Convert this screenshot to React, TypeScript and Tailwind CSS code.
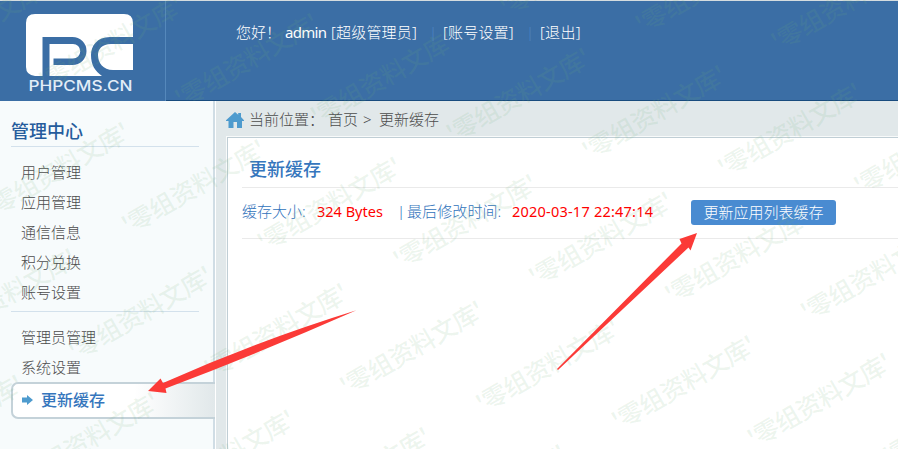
import React from "react";

const sans = "font-['Noto_Sans','Noto_Sans_CJK_SC',sans-serif]";

const marks: { x: number; y: number }[] = [];
for (let i = -6; i < 8; i++) {
  for (let j = -4; j < 3; j++) {
    const x = 412.3 + i * 135.8 - j * 53.2;
    const y = 348.5 + i * 17.4 + j * 126.4;
    if (x > -90 && x < 990 && y > -60 && y < 510) marks.push({ x, y });
  }
}

function Watermark() {
  return (
    <svg className="pointer-events-none absolute inset-0 h-[449px] w-[898px]" viewBox="0 0 898 449" aria-hidden="true">
      {marks.map((m, i) => (
        <text
          key={i}
          transform={`translate(${m.x} ${m.y}) rotate(-30)`}
          textAnchor="middle"
          y="9"
          textLength="161"
          className="fill-[#6fb07a]/13 font-['Noto_Sans_CJK_SC',sans-serif] text-[25px] font-medium"
        >
          '零组资料文库'
        </text>
      ))}
    </svg>
  );
}

function Arrows() {
  return (
    <svg className="pointer-events-none absolute inset-0 h-[449px] w-[898px]" viewBox="0 0 898 449" aria-hidden="true">
      <g fill="#fb3a37">
        <path d="M148 391 L160.500 378.500 L163 383 Q260 340 356.500 310.300 Q262 352 165.500 388.500 L166.500 393 Z" />
        <path d="M697 233 L679.500 239 L681.500 243.500 L557 369 L558 370 L688.500 247.500 L690.500 250.500 Z" />
      </g>
    </svg>
  );
}

function Logo() {
  return (
    <svg className="ml-6 mt-[11px] h-[82px] w-[112px]" viewBox="24 12 112 82">
      <path
        d="M35 14 H124 Q133 14 133 23 V37 H110 C97 37 91 46 91 55 C91 65 95 71 102 76 H49.500 V44 H73 A7.250 7.250 0 0 1 73 58.500 H53.500 V65 H72.500 A14 14 0 0 0 72.500 37 H42.500 V76 H35 Q26 75 26 67 V23 Q26 14 35 14 Z M133 44 H111 C102 44 98 49 98 55 C98 63 103 70 113 70 H133 Z"
        fill="#fff"
      />
      <text x="28.5" y="90.500" textLength="104" lengthAdjust="spacingAndGlyphs" fill="#e3edf8" className="font-['Inter',sans-serif] text-[14.5px] font-medium">
        PHPCMS.CN
      </text>
    </svg>
  );
}

const groups = [
  ["用户管理", "应用管理", "通信信息", "积分兑换", "账号设置"],
  ["管理员管理", "系统设置"],
];

function Sidebar() {
  return (
    <aside className="h-[348px] w-[216px] shrink-0 border-r border-white bg-[#f7fbfc] shadow-[inset_-2px_0_0_#d0dde5]">
      <div className="pl-[11px] pt-[18px]">
        <h2 className="h-[28px] w-[188px] border-b border-[#d3e1ec] text-[18px] font-medium leading-[25px] text-[#255c9c]">管理中心</h2>
        <ul className="h-[165px] w-[188px] border-b border-[#d3e1ec] pt-[10px]">
          {groups[0].map((t) => (
            <li key={t} className="h-[30px] pl-[10px] leading-[30px]">{t}</li>
          ))}
        </ul>
        <ul className="pt-[10px]">
          {groups[1].map((t) => (
            <li key={t} className="h-[30px] pl-[10px] leading-[30px]">{t}</li>
          ))}
        </ul>
        <div className="flex h-[37px] w-[204px] items-center rounded-l-[7px] border-2 border-r-0 border-[#c4d2d9] bg-gradient-to-r from-white from-60% to-[#e1e8ea] pb-px pl-[9px] text-[16px] font-medium text-[#3576bd]">
          <svg className="mr-[8px] h-[10px] w-[11px]" viewBox="0 0 11 10"><path d="M0 2.500h5V0l6 5-6 5V7.500H0z" fill="#4e9bce" /></svg>
          更新缓存
        </div>
      </div>
    </aside>
  );
}

export default function App() {
  return (
    <div className={`relative h-[449px] w-[898px] overflow-hidden whitespace-nowrap bg-[#e1e8ea] text-[15px] font-light text-[#4c4c4c] ${sans}`}>
      <header className="flex h-[101px] border-t border-[#d5dcdf] bg-[#3b6ea5]">
        <div className="w-[166px] border-r border-[#5588bb]"><Logo /></div>
        <div className="flex h-full flex-1 border-b border-[#184b7e] pl-[70px] pt-[19px] leading-[24px] text-white">
          <span className="w-[49px]">您好！</span>
          <span className="w-[46px] font-normal tracking-[-0.7px]">admin</span>
          <span className="w-[98px] tracking-[0.2px]">[超级管理员]</span>
          <span className="w-[14px] text-[#4e83c1]">|</span>
          <span className="w-[83px] tracking-[0.2px]">[账号设置]</span>
          <span className="w-[14px] text-[#4e83c1]">|</span>
          <span className="tracking-[0.3px]">[退出]</span>
        </div>
      </header>
      <div className="flex">
        <Sidebar />
        <main className="flex-1 pl-[11px]">
          <div className="flex h-[36px] items-center">
            <svg className="-ml-px mt-px h-[16px] w-[18px]" viewBox="0 0 18 16"><path d="M9 0l3.200 2.700V1H15v4l3 3.300V9h-2v7h-5v-6H7.500v6H2.500V9H0V8.300z" fill="#4e9bce" /></svg>
            <span className="ml-[5px] w-[79px]">当前位置：</span>
            <span className="w-[35px]">首页</span>
            <span className="w-[16px]">&gt;</span>
            <span>更新缓存</span>
          </div>
          <section className="h-[312px] border-l border-t border-[#c0ced5] bg-white pl-[14px] pt-[14px] shadow-[0_0_0_1px_#f8fafa]">
            <h1 className="h-[36px] border-b border-[#eaeaea] pl-[7px] text-[18px] font-medium leading-[35px] text-[#3576bd]">更新缓存</h1>
            <div className="flex h-[51px] border-b border-[#eaeaea] pt-[12px] leading-[23px] text-[#3072bb]">
              <span className="w-[75px]">缓存大小:</span>
              <span className="w-[80px] text-[14.5px] font-normal text-[#ff0000]">324 Bytes</span>
              <span className="w-[10px]">|</span>
              <span className="w-[105px] tracking-[0.1px]">最后修改时间:</span>
              <span className="w-[179px] text-[14.5px] font-normal tracking-[0.22px] text-[#ff0000]">2020-03-17 22:47:14</span>
              <button className="h-[25px] w-[145px] rounded-[3px] bg-[#498bd1] pb-px leading-[23px] text-white">更新应用列表缓存</button>
            </div>
          </section>
        </main>
      </div>
      <Watermark />
      <Arrows />
    </div>
  );
}
